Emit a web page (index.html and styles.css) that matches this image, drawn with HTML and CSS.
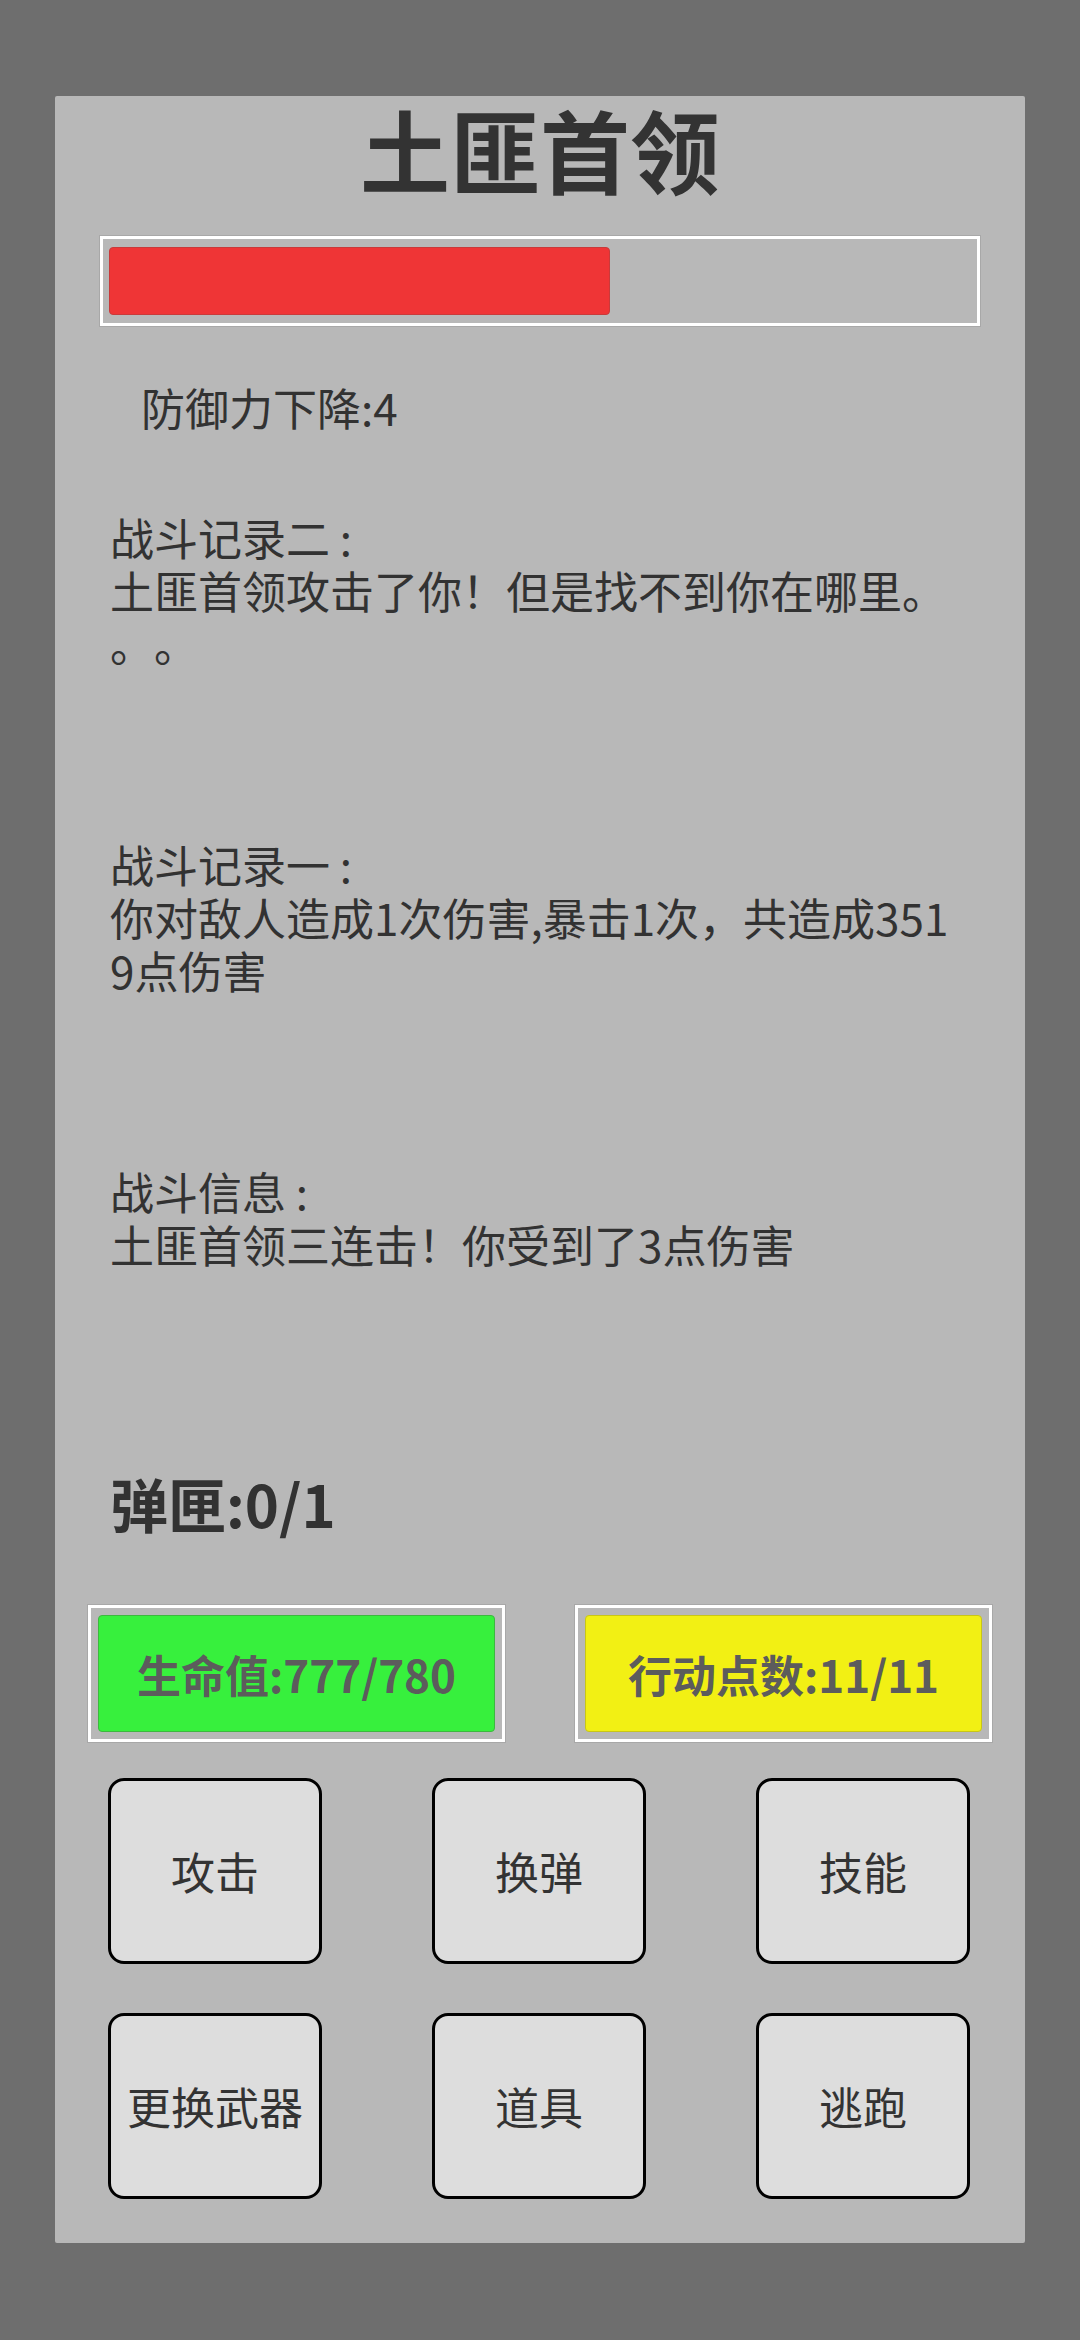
FILE: index.html
```html
<!DOCTYPE html>
<html lang="zh-CN">
<head>
  <meta charset="UTF-8">
  <meta name="viewport" content="width=device-width, initial-scale=1.0">
  <title>战斗</title>
  <link rel="stylesheet" href="styles.css">
</head>
<body>
<div class="panel">
  <h1 class="enemy-name">土匪首领</h1>
  <div class="hp-bar">
    <div class="hp-fill" style="width: 58.1%;"></div>
  </div>
  <div class="debuff">防御力下降:4</div>

  <div class="log">
    战斗记录二 :<br>
    土匪首领攻击了你！但是找不到你在哪里。。。
  </div>
  <div class="log">
    战斗记录一 :<br>
    你对敌人造成1次伤害,暴击1次，共造成3519点伤害
  </div>
  <div class="log log-info">
    战斗信息 :<br>
    土匪首领三连击！你受到了3点伤害
  </div>

  <div class="ammo">弹匣:0/1</div>

  <div class="stats">
    <div class="stat-frame">
      <div class="stat stat-hp">生命值:777/780</div>
    </div>
    <div class="stat-frame">
      <div class="stat stat-ap">行动点数:11/11</div>
    </div>
  </div>

  <div class="actions">
    <button class="action">攻击</button>
    <button class="action">换弹</button>
    <button class="action">技能</button>
    <button class="action">更换武器</button>
    <button class="action">道具</button>
    <button class="action">逃跑</button>
  </div>
</div>
</body>
</html>
```

FILE: styles.css
```css
body {
  font-family: "Noto Sans CJK SC", sans-serif;
  background-color: #6e6e6e;
  color: #323232;
  margin: 0;
  padding: 0;
}

.panel {
  box-sizing: border-box;
  width: 970px;
  height: 2147px;
  margin: 96px 0 0 55px;
  padding: 2px 55px 44px;
  background-color: #b8b8b8;
  border-radius: 2px;
}

.enemy-name {
  margin: 0;
  font-size: 90px;
  line-height: 100px;
  font-weight: bold;
  text-align: center;
  color: #333;
}

.hp-bar {
  box-sizing: border-box;
  width: 880px;
  height: 90px;
  margin: 38px 0 0 -10px;
  padding: 8px 6px;
  border: 3px solid #fff;
  box-shadow: 0 0 0 1px #a8a8a8;
}

.hp-fill {
  box-sizing: border-box;
  height: 100%;
  background-color: #ef3536;
  border: 1px solid #c93a3a;
  border-radius: 4px;
}

.debuff {
  margin: 55px 0 77px;
  padding-left: 31px;
  font-size: 44px;
  line-height: 53px;
}

.log {
  width: 848px;
  height: 327px;
  font-size: 44px;
  line-height: 53px;
  line-break: anywhere;
  text-spacing-trim: space-all;
}

.log-info {
  height: 303px;
}

.ammo {
  font-size: 58px;
  line-height: 70px;
  font-weight: bold;
}

.stats {
  display: flex;
  gap: 70px;
  width: 904px;
  margin: 67px 0 0 -22px;
}

.stat-frame {
  box-sizing: border-box;
  flex: 0 0 417px;
  height: 137px;
  padding: 7px;
  border: 3px solid #fff;
  box-shadow: 0 0 0 1px #a8a8a8;
}

.stat {
  box-sizing: border-box;
  height: 100%;
  display: flex;
  align-items: center;
  justify-content: center;
  border-radius: 4px;
  font-size: 44px;
  font-weight: bold;
  color: #5c5c5c;
}

.stat-hp {
  background-color: #37f03d;
  border: 1px solid #3cb83f;
}

.stat-ap {
  background-color: #f2f014;
  border: 1px solid #c9c616;
}

.actions {
  display: grid;
  grid-template-columns: repeat(3, 214px);
  grid-auto-rows: 186px;
  column-gap: 110px;
  row-gap: 49px;
  margin: 36px 0 0 -2px;
}

.action {
  font-family: inherit;
  font-size: 44px;
  color: #333;
  background-color: #dddddd;
  border: 3px solid #000;
  border-radius: 16px;
  padding: 0;
}
```
